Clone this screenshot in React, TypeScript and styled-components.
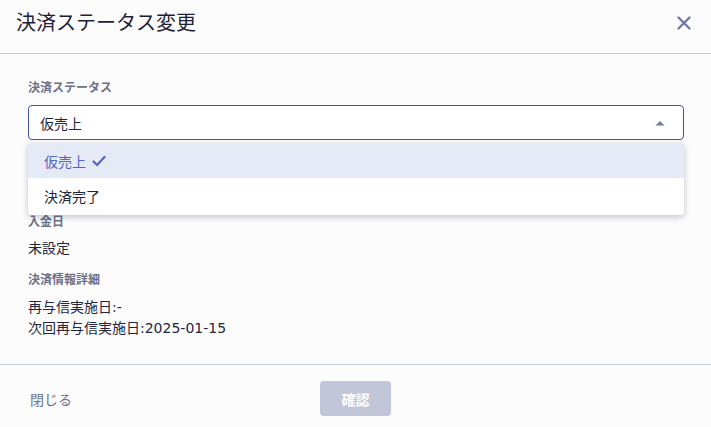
import styled, { createGlobalStyle } from "styled-components";

const GlobalStyle = createGlobalStyle`
  html, body {
    margin: 0;
    padding: 0;
    background: #fcfcfd;
  }
  body {
    font-family: "DejaVu Sans", "Noto Sans CJK JP", sans-serif;
    color: #23263a;
  }
`;

const Dialog = styled.div`
  width: 711px;
  height: 427px;
  display: flex;
  flex-direction: column;
  background: #fcfcfd;
  overflow: hidden;
`;

const Header = styled.header`
  display: flex;
  justify-content: space-between;
  align-items: flex-start;
  padding: 9px 17px 0 16px;
  height: 54px;
  flex-shrink: 0;
  box-sizing: border-box;
  border-bottom: 1px solid #c9d0e2;
`;

const Title = styled.h2`
  margin: 0;
  font-family: "Noto Sans CJK JP", sans-serif;
  font-size: 20px;
  font-weight: 400;
  line-height: 26px;
  color: #1f2237;
`;

const CloseButton = styled.button`
  border: none;
  background: none;
  padding: 0;
  margin-top: 4px;
  width: 20px;
  height: 20px;
  display: flex;
  align-items: center;
  justify-content: center;
  cursor: pointer;
`;

const Body = styled.div`
  padding: 25px 27px 0 28px;
  height: 311px;
  flex-shrink: 0;
  box-sizing: border-box;
  border-bottom: 1px solid #c9d0e2;
`;

const Field = styled.div<{ $gap?: number }>`
  margin-bottom: ${(p) => p.$gap ?? 14}px;
`;

const Label = styled.div<{ $space?: number }>`
  font-family: "Noto Sans CJK JP", sans-serif;
  font-size: 12px;
  font-weight: 700;
  line-height: 16px;
  color: #6b7084;
  margin-bottom: ${(p) => p.$space ?? 8}px;
`;

const Value = styled.div`
  font-size: 14px;
  line-height: 21px;
  color: #23263a;
`;

const SelectWrap = styled.div`
  position: relative;
`;

const SelectBox = styled.div`
  height: 35px;
  box-sizing: border-box;
  border: 1px solid #3f51b5;
  border-radius: 4px;
  background: #fff;
  display: flex;
  align-items: center;
  justify-content: space-between;
  padding: 0 18px 0 11px;
  font-size: 14px;
  color: #23263a;
`;

const Menu = styled.ul`
  position: absolute;
  top: 38px;
  left: 0;
  right: 0;
  margin: 0;
  padding: 0 0 2px;
  list-style: none;
  background: #fff;
  border-radius: 4px;
  box-shadow: 0 2px 6px rgba(40, 45, 70, 0.28);
  overflow: hidden;
  z-index: 2;
`;

const Option = styled.li<{ $selected?: boolean }>`
  height: 35px;
  display: flex;
  align-items: center;
  gap: 6px;
  padding: 0 16px;
  font-size: 14px;
  color: ${(p) => (p.$selected ? "#5563c1" : "#23263a")};
  background: ${(p) => (p.$selected ? "#e6eaf6" : "#fff")};
`;

const Footer = styled.footer`
  display: grid;
  grid-template-columns: 1fr auto 1fr;
  align-items: center;
  padding: 16px 30px 0;
`;

const TextButton = styled.button`
  justify-self: start;
  border: none;
  background: none;
  padding: 0;
  font-family: "Noto Sans CJK JP", sans-serif;
  font-size: 14px;
  color: #6f7486;
`;

const PrimaryButton = styled.button`
  width: 71px;
  height: 35px;
  border: none;
  border-radius: 4px;
  background: #c1c6d9;
  color: #fff;
  font-family: "Noto Sans CJK JP", sans-serif;
  font-size: 14px;
  font-weight: 700;
`;

function CloseIcon() {
  return (
    <svg width="14" height="14" viewBox="0 0 14 14">
      <path
        d="M1.5 1.5 L12.5 12.5 M12.5 1.5 L1.5 12.5"
        stroke="#7279a8"
        strokeWidth="2.4"
        strokeLinecap="round"
      />
    </svg>
  );
}

function ArrowUp() {
  return (
    <svg width="10" height="6" viewBox="0 0 10 6">
      <path d="M0.5 5.5 L5 1 L9.5 5.5 Z" fill="#7378a0" />
    </svg>
  );
}

function Check() {
  return (
    <svg width="14" height="12" viewBox="0 0 14 12">
      <path
        d="M1.5 6.5 L5 10 L12.5 2"
        stroke="#5563c1"
        strokeWidth="2.2"
        fill="none"
        strokeLinecap="round"
        strokeLinejoin="round"
      />
    </svg>
  );
}

export default function App() {
  const options = ["仮売上", "決済完了"];
  const current = "仮売上";

  return (
    <>
      <GlobalStyle />
      <Dialog>
        <Header>
          <Title>決済ステータス変更</Title>
          <CloseButton aria-label="閉じる">
            <CloseIcon />
          </CloseButton>
        </Header>
        <Body>
          <Field>
            <Label $space={10}>決済ステータス</Label>
            <SelectWrap>
              <SelectBox>
                <span>{current}</span>
                <ArrowUp />
              </SelectBox>
              <Menu>
                {options.map((o) => (
                  <Option key={o} $selected={o === current}>
                    {o}
                    {o === current && <Check />}
                  </Option>
                ))}
              </Menu>
            </SelectWrap>
          </Field>
          <Field>
            <Label>決済日</Label>
            <Value>2025-01-15</Value>
          </Field>
          <Field $gap={12}>
            <Label $space={9}>入金日</Label>
            <Value>未設定</Value>
          </Field>
          <Field>
            <Label $space={10}>決済情報詳細</Label>
            <Value>再与信実施日:-</Value>
            <Value>次回再与信実施日:2025-01-15</Value>
          </Field>
        </Body>
        <Footer>
          <TextButton>閉じる</TextButton>
          <PrimaryButton disabled>確認</PrimaryButton>
        </Footer>
      </Dialog>
    </>
  );
}
